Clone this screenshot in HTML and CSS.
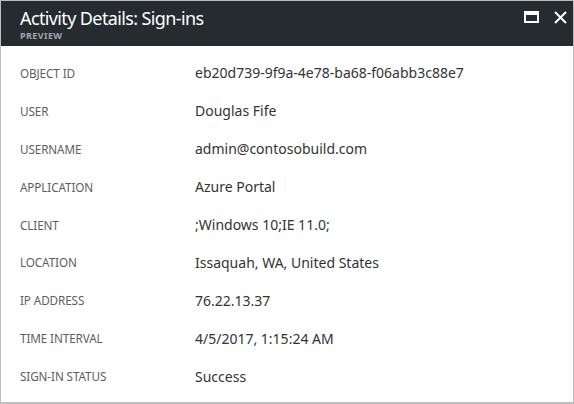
FILE: index.html
```html
<!DOCTYPE html>
<html>
<head>
<meta charset="utf-8">
<link rel="stylesheet" href="styles.css">
</head>
<body>
<div class="blade">
  <div class="header">
    <div class="titles">
      <div class="title">Activity Details: Sign-ins</div>
      <div class="subtitle">PREVIEW</div>
    </div>
    <div class="controls">
      <svg class="icon" width="15" height="12" viewBox="0 0 15 12"><rect x="1" y="1" width="13" height="10" fill="none" stroke="#fff" stroke-width="2"/><rect x="1" y="1" width="13" height="3" fill="#fff"/></svg>
      <svg class="icon" width="13" height="13" viewBox="0 0 13 13"><path d="M1 1L12 12M12 1L1 12" stroke="#fff" stroke-width="2"/></svg>
    </div>
  </div>
  <div class="rows">
    <div class="row"><div class="label">OBJECT ID</div><div class="value">eb20d739-9f9a-4e78-ba68-f06abb3c88e7</div></div>
    <div class="row"><div class="label">USER</div><div class="value">Douglas Fife</div></div>
    <div class="row"><div class="label">USERNAME</div><div class="value">admin@contosobuild.com</div></div>
    <div class="row"><div class="label">APPLICATION</div><div class="value">Azure Portal</div></div>
    <div class="row"><div class="label">CLIENT</div><div class="value">;Windows 10;IE 11.0;</div></div>
    <div class="row"><div class="label">LOCATION</div><div class="value">Issaquah, WA, United States</div></div>
    <div class="row"><div class="label">IP ADDRESS</div><div class="value">76.22.13.37</div></div>
    <div class="row"><div class="label">TIME INTERVAL</div><div class="value">4/5/2017, 1:15:24 AM</div></div>
    <div class="row"><div class="label">SIGN-IN STATUS</div><div class="value">Success</div></div>
  </div>
</div>
</body>
</html>
```
FILE: styles.css
```css
html, body {
  margin: 0;
  padding: 0;
  background: #ffffff;
}
.blade {
  width: 574px;
  height: 404px;
  box-sizing: border-box;
  border: 1px solid #bdbdbd;
  border-bottom-width: 2px;
  background: #fff;
  font-family: "Noto Sans", "Open Sans", sans-serif;
  overflow: hidden;
}
.header {
  height: 45px;
  background: #262b30;
  display: flex;
  justify-content: space-between;
  padding: 0 6px 0 19px;
}
.titles {
  padding-top: 5px;
}
.title {
  color: #ffffff;
  font-size: 18px;
  line-height: 24px;
  letter-spacing: -0.62px;
}
.subtitle {
  color: #a3a8ad;
  font-size: 9px;
  font-weight: bold;
  line-height: 11px;
  letter-spacing: 0.4px;
}
.controls {
  display: flex;
  align-items: flex-start;
  gap: 15px;
  padding-top: 10px;
}
.icon {
  display: block;
}
.rows {
  padding: 0 0 0 19px;
}
.row {
  display: flex;
  align-items: center;
  height: 37.9px;
}
.row:first-child {
  margin-top: 8px;
}
.label {
  width: 175px;
  color: #5e5e5e;
  font-size: 11.7px;
  letter-spacing: -0.1px;
}
.value {
  color: #333333;
  font-size: 14px;
}
```
